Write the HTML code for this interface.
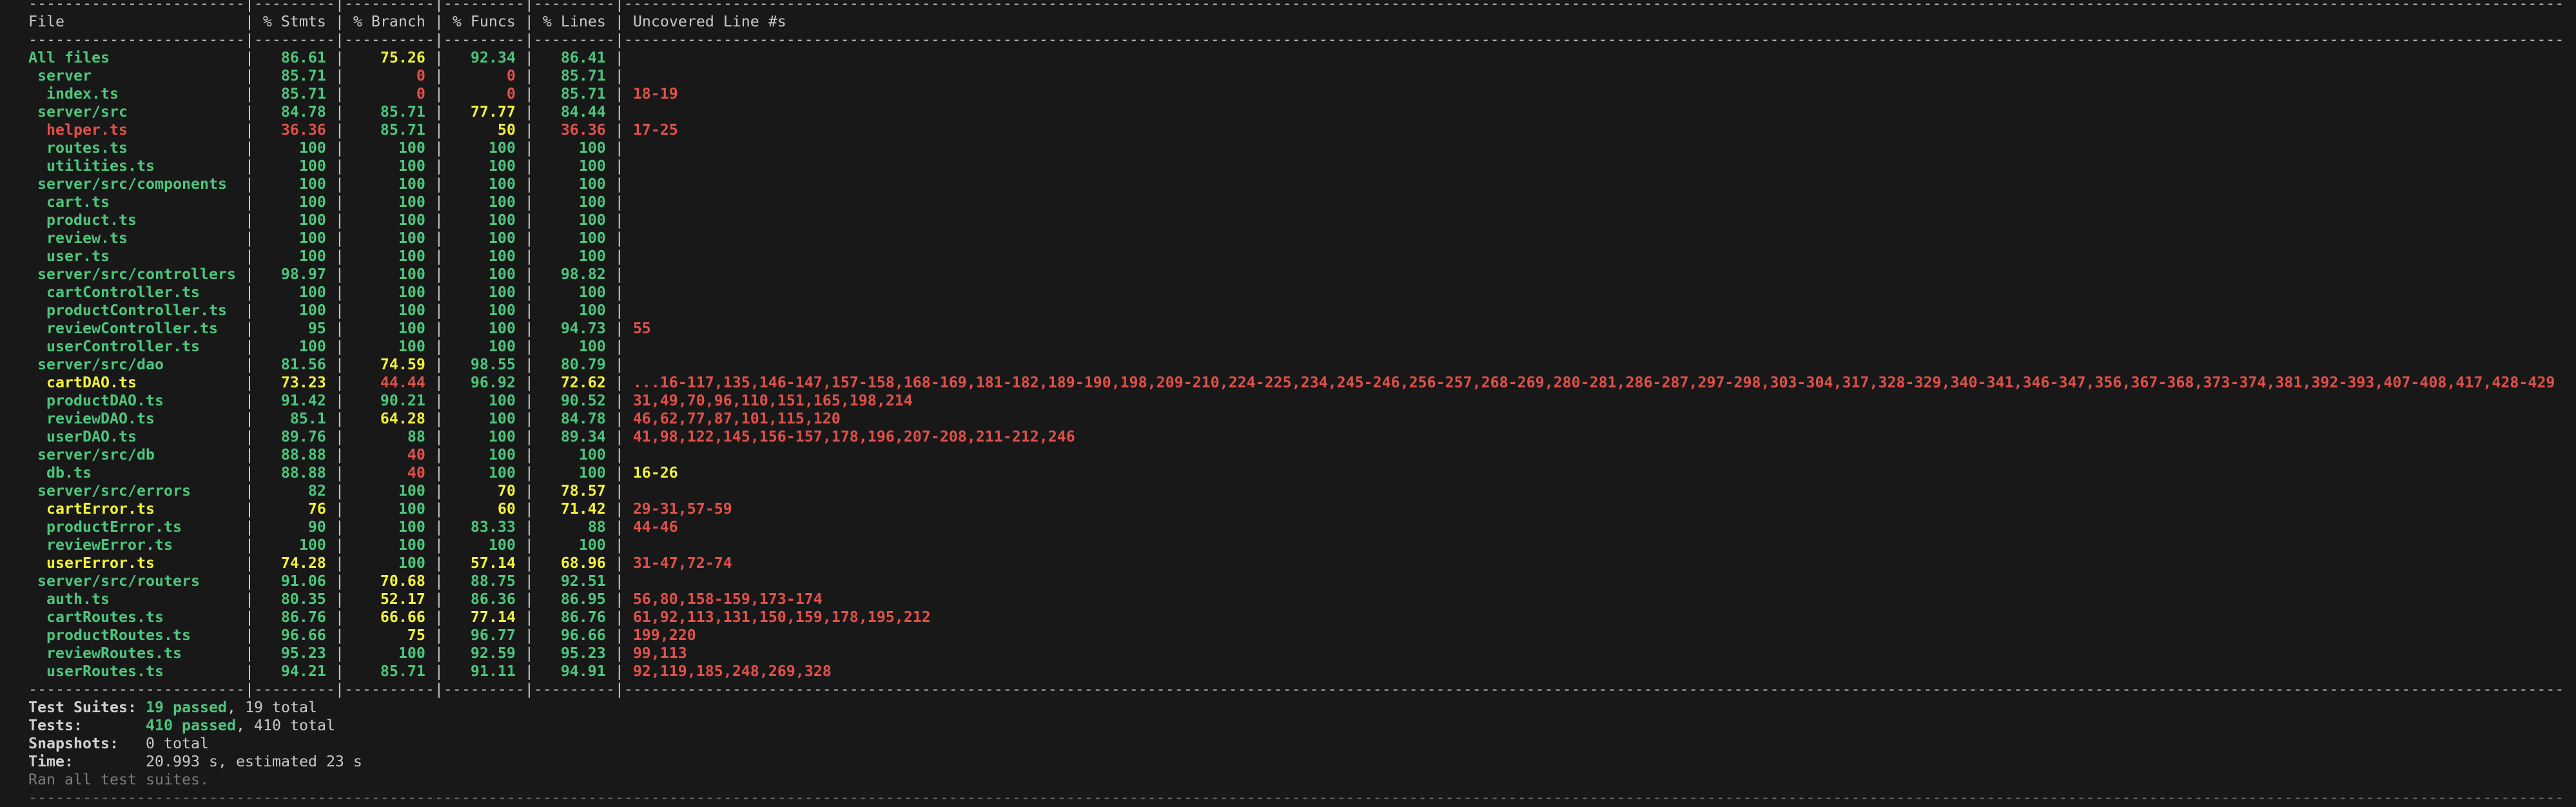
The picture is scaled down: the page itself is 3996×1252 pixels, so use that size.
<!DOCTYPE html>
<html><head><meta charset="utf-8"><style>
html,body{margin:0;padding:0;background:#181818;width:3996px;height:1244px;overflow:hidden}
#t{position:absolute;left:44px;top:-8px;font-family:"DejaVu Sans Mono","Liberation Mono",monospace;font-size:23.26px;line-height:28px;color:#c8c8c8;white-space:normal}
#t div{height:28px;white-space:pre;overflow:visible}
#t div.d{width:3934px;overflow:hidden}
b{font-weight:bold}
i{font-style:normal;display:inline-block;text-align:right}
.n{display:inline-block;width:24ch}
.s,.f,.l{width:8ch}.b{width:9ch}
.g{color:#4cc67c}.y{color:#f2f23a}.r{color:#e2504a}
.w{font-weight:bold;color:#d0d0d0}
.d{color:#707070}
</style></head><body><div id="t">
<div>------------------------|---------|----------|---------|---------|-----------------------------------------------------------------------------------------------------------------------------------------------------------------------------------------------------------------------</div>
<div><span class="n">File</span>| % Stmts | % Branch | % Funcs | % Lines | Uncovered Line #s</div>
<div>------------------------|---------|----------|---------|---------|-----------------------------------------------------------------------------------------------------------------------------------------------------------------------------------------------------------------------</div>
<div><b class="n g">All files</b>|<i class="s"><b class="g">86.61</b></i> |<i class="b"><b class="y">75.26</b></i> |<i class="f"><b class="g">92.34</b></i> |<i class="l"><b class="g">86.41</b></i> | </div>
<div><b class="n g"> server</b>|<i class="s"><b class="g">85.71</b></i> |<i class="b"><b class="r">0</b></i> |<i class="f"><b class="r">0</b></i> |<i class="l"><b class="g">85.71</b></i> | </div>
<div><b class="n g">  index.ts</b>|<i class="s"><b class="g">85.71</b></i> |<i class="b"><b class="r">0</b></i> |<i class="f"><b class="r">0</b></i> |<i class="l"><b class="g">85.71</b></i> | <b class="r">18-19</b></div>
<div><b class="n g"> server/src</b>|<i class="s"><b class="g">84.78</b></i> |<i class="b"><b class="g">85.71</b></i> |<i class="f"><b class="y">77.77</b></i> |<i class="l"><b class="g">84.44</b></i> | </div>
<div><b class="n r">  helper.ts</b>|<i class="s"><b class="r">36.36</b></i> |<i class="b"><b class="g">85.71</b></i> |<i class="f"><b class="y">50</b></i> |<i class="l"><b class="r">36.36</b></i> | <b class="r">17-25</b></div>
<div><b class="n g">  routes.ts</b>|<i class="s"><b class="g">100</b></i> |<i class="b"><b class="g">100</b></i> |<i class="f"><b class="g">100</b></i> |<i class="l"><b class="g">100</b></i> | </div>
<div><b class="n g">  utilities.ts</b>|<i class="s"><b class="g">100</b></i> |<i class="b"><b class="g">100</b></i> |<i class="f"><b class="g">100</b></i> |<i class="l"><b class="g">100</b></i> | </div>
<div><b class="n g"> server/src/components</b>|<i class="s"><b class="g">100</b></i> |<i class="b"><b class="g">100</b></i> |<i class="f"><b class="g">100</b></i> |<i class="l"><b class="g">100</b></i> | </div>
<div><b class="n g">  cart.ts</b>|<i class="s"><b class="g">100</b></i> |<i class="b"><b class="g">100</b></i> |<i class="f"><b class="g">100</b></i> |<i class="l"><b class="g">100</b></i> | </div>
<div><b class="n g">  product.ts</b>|<i class="s"><b class="g">100</b></i> |<i class="b"><b class="g">100</b></i> |<i class="f"><b class="g">100</b></i> |<i class="l"><b class="g">100</b></i> | </div>
<div><b class="n g">  review.ts</b>|<i class="s"><b class="g">100</b></i> |<i class="b"><b class="g">100</b></i> |<i class="f"><b class="g">100</b></i> |<i class="l"><b class="g">100</b></i> | </div>
<div><b class="n g">  user.ts</b>|<i class="s"><b class="g">100</b></i> |<i class="b"><b class="g">100</b></i> |<i class="f"><b class="g">100</b></i> |<i class="l"><b class="g">100</b></i> | </div>
<div><b class="n g"> server/src/controllers</b>|<i class="s"><b class="g">98.97</b></i> |<i class="b"><b class="g">100</b></i> |<i class="f"><b class="g">100</b></i> |<i class="l"><b class="g">98.82</b></i> | </div>
<div><b class="n g">  cartController.ts</b>|<i class="s"><b class="g">100</b></i> |<i class="b"><b class="g">100</b></i> |<i class="f"><b class="g">100</b></i> |<i class="l"><b class="g">100</b></i> | </div>
<div><b class="n g">  productController.ts</b>|<i class="s"><b class="g">100</b></i> |<i class="b"><b class="g">100</b></i> |<i class="f"><b class="g">100</b></i> |<i class="l"><b class="g">100</b></i> | </div>
<div><b class="n g">  reviewController.ts</b>|<i class="s"><b class="g">95</b></i> |<i class="b"><b class="g">100</b></i> |<i class="f"><b class="g">100</b></i> |<i class="l"><b class="g">94.73</b></i> | <b class="r">55</b></div>
<div><b class="n g">  userController.ts</b>|<i class="s"><b class="g">100</b></i> |<i class="b"><b class="g">100</b></i> |<i class="f"><b class="g">100</b></i> |<i class="l"><b class="g">100</b></i> | </div>
<div><b class="n g"> server/src/dao</b>|<i class="s"><b class="g">81.56</b></i> |<i class="b"><b class="y">74.59</b></i> |<i class="f"><b class="g">98.55</b></i> |<i class="l"><b class="g">80.79</b></i> | </div>
<div><b class="n y">  cartDAO.ts</b>|<i class="s"><b class="y">73.23</b></i> |<i class="b"><b class="r">44.44</b></i> |<i class="f"><b class="g">96.92</b></i> |<i class="l"><b class="y">72.62</b></i> | <b class="r">...16-117,135,146-147,157-158,168-169,181-182,189-190,198,209-210,224-225,234,245-246,256-257,268-269,280-281,286-287,297-298,303-304,317,328-329,340-341,346-347,356,367-368,373-374,381,392-393,407-408,417,428-429</b></div>
<div><b class="n g">  productDAO.ts</b>|<i class="s"><b class="g">91.42</b></i> |<i class="b"><b class="g">90.21</b></i> |<i class="f"><b class="g">100</b></i> |<i class="l"><b class="g">90.52</b></i> | <b class="r">31,49,70,96,110,151,165,198,214</b></div>
<div><b class="n g">  reviewDAO.ts</b>|<i class="s"><b class="g">85.1</b></i> |<i class="b"><b class="y">64.28</b></i> |<i class="f"><b class="g">100</b></i> |<i class="l"><b class="g">84.78</b></i> | <b class="r">46,62,77,87,101,115,120</b></div>
<div><b class="n g">  userDAO.ts</b>|<i class="s"><b class="g">89.76</b></i> |<i class="b"><b class="g">88</b></i> |<i class="f"><b class="g">100</b></i> |<i class="l"><b class="g">89.34</b></i> | <b class="r">41,98,122,145,156-157,178,196,207-208,211-212,246</b></div>
<div><b class="n g"> server/src/db</b>|<i class="s"><b class="g">88.88</b></i> |<i class="b"><b class="r">40</b></i> |<i class="f"><b class="g">100</b></i> |<i class="l"><b class="g">100</b></i> | </div>
<div><b class="n g">  db.ts</b>|<i class="s"><b class="g">88.88</b></i> |<i class="b"><b class="r">40</b></i> |<i class="f"><b class="g">100</b></i> |<i class="l"><b class="g">100</b></i> | <b class="y">16-26</b></div>
<div><b class="n g"> server/src/errors</b>|<i class="s"><b class="g">82</b></i> |<i class="b"><b class="g">100</b></i> |<i class="f"><b class="y">70</b></i> |<i class="l"><b class="y">78.57</b></i> | </div>
<div><b class="n y">  cartError.ts</b>|<i class="s"><b class="y">76</b></i> |<i class="b"><b class="g">100</b></i> |<i class="f"><b class="y">60</b></i> |<i class="l"><b class="y">71.42</b></i> | <b class="r">29-31,57-59</b></div>
<div><b class="n g">  productError.ts</b>|<i class="s"><b class="g">90</b></i> |<i class="b"><b class="g">100</b></i> |<i class="f"><b class="g">83.33</b></i> |<i class="l"><b class="g">88</b></i> | <b class="r">44-46</b></div>
<div><b class="n g">  reviewError.ts</b>|<i class="s"><b class="g">100</b></i> |<i class="b"><b class="g">100</b></i> |<i class="f"><b class="g">100</b></i> |<i class="l"><b class="g">100</b></i> | </div>
<div><b class="n y">  userError.ts</b>|<i class="s"><b class="y">74.28</b></i> |<i class="b"><b class="g">100</b></i> |<i class="f"><b class="y">57.14</b></i> |<i class="l"><b class="y">68.96</b></i> | <b class="r">31-47,72-74</b></div>
<div><b class="n g"> server/src/routers</b>|<i class="s"><b class="g">91.06</b></i> |<i class="b"><b class="y">70.68</b></i> |<i class="f"><b class="g">88.75</b></i> |<i class="l"><b class="g">92.51</b></i> | </div>
<div><b class="n g">  auth.ts</b>|<i class="s"><b class="g">80.35</b></i> |<i class="b"><b class="y">52.17</b></i> |<i class="f"><b class="g">86.36</b></i> |<i class="l"><b class="g">86.95</b></i> | <b class="r">56,80,158-159,173-174</b></div>
<div><b class="n g">  cartRoutes.ts</b>|<i class="s"><b class="g">86.76</b></i> |<i class="b"><b class="y">66.66</b></i> |<i class="f"><b class="y">77.14</b></i> |<i class="l"><b class="g">86.76</b></i> | <b class="r">61,92,113,131,150,159,178,195,212</b></div>
<div><b class="n g">  productRoutes.ts</b>|<i class="s"><b class="g">96.66</b></i> |<i class="b"><b class="y">75</b></i> |<i class="f"><b class="g">96.77</b></i> |<i class="l"><b class="g">96.66</b></i> | <b class="r">199,220</b></div>
<div><b class="n g">  reviewRoutes.ts</b>|<i class="s"><b class="g">95.23</b></i> |<i class="b"><b class="g">100</b></i> |<i class="f"><b class="g">92.59</b></i> |<i class="l"><b class="g">95.23</b></i> | <b class="r">99,113</b></div>
<div><b class="n g">  userRoutes.ts</b>|<i class="s"><b class="g">94.21</b></i> |<i class="b"><b class="g">85.71</b></i> |<i class="f"><b class="g">91.11</b></i> |<i class="l"><b class="g">94.91</b></i> | <b class="r">92,119,185,248,269,328</b></div>
<div>------------------------|---------|----------|---------|---------|-----------------------------------------------------------------------------------------------------------------------------------------------------------------------------------------------------------------------</div>
<div><b class="w">Test Suites: </b><b class="g">19 passed</b>, 19 total</div>
<div><b class="w">Tests:       </b><b class="g">410 passed</b>, 410 total</div>
<div><b class="w">Snapshots:   </b>0 total</div>
<div><b class="w">Time:        </b>20.993 s, estimated 23 s</div>
<div style="color:#7a7a7a">Ran all test suites.</div>
<div class="d">-----------------------------------------------------------------------------------------------------------------------------------------------------------------------------------------------------------------------------------------------------------------------------------------------------------</div>
</div></body></html>
